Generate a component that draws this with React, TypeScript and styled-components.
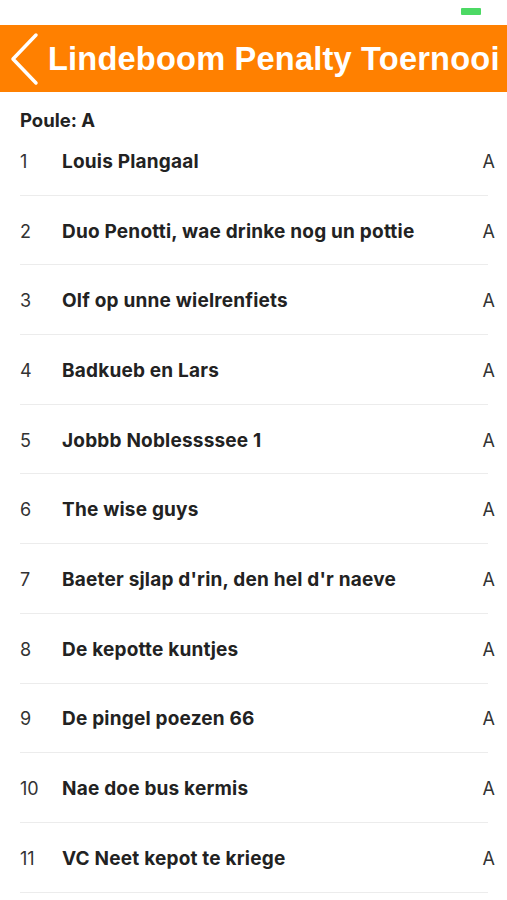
import styled, { createGlobalStyle } from "styled-components";

const teams = [
  "Louis Plangaal",
  "Duo Penotti, wae drinke nog un pottie",
  "Olf op unne wielrenfiets",
  "Badkueb en Lars",
  "Jobbb Noblessssee 1",
  "The wise guys",
  "Baeter sjlap d'rin, den hel d'r naeve",
  "De kepotte kuntjes",
  "De pingel poezen 66",
  "Nae doe bus kermis",
  "VC Neet kepot te kriege",
];

const GlobalStyle = createGlobalStyle`
  html, body {
    margin: 0;
    padding: 0;
    background: #fff;
    overflow: hidden;
  }
  body {
    font-family: Inter, "Liberation Sans", sans-serif;
    color: #222;
  }
`;

const App = () => {
  return (
    <Screen>
      <GlobalStyle />
      <StatusBar>
        <Battery />
      </StatusBar>
      <NavBar>
        <BackButton aria-label="back">
          <svg width="30" height="54" viewBox="0 0 30 54">
            <path
              d="M27 3 L4 27 L27 51"
              fill="none"
              stroke="#fff"
              strokeWidth="3.5"
              strokeLinecap="round"
              strokeLinejoin="round"
            />
          </svg>
        </BackButton>
        <Title>Lindeboom Penalty Toernooi</Title>
      </NavBar>
      <Section>
        <PouleLabel>Poule: A</PouleLabel>
        <List>
          {teams.map((name, i) => (
            <Row key={name}>
              <Num>{i + 1}</Num>
              <Name>{name}</Name>
              <Group>A</Group>
            </Row>
          ))}
        </List>
      </Section>
    </Screen>
  );
};

export default App;

const Screen = styled.div`
  width: 507px;
  height: 900px;
  overflow: hidden;
  background: #fff;
`;

const StatusBar = styled.div`
  height: 25px;
  display: flex;
  justify-content: flex-end;
  align-items: flex-start;
  padding-right: 26px;
`;

const Battery = styled.div`
  width: 20px;
  height: 7px;
  margin-top: 8px;
  border-radius: 1px;
  background: #4cd964;
`;

const NavBar = styled.div`
  height: 67px;
  background: #ff8000;
  display: flex;
  align-items: center;
  padding-left: 9px;
  gap: 9px;
`;

const BackButton = styled.div`
  display: flex;
  align-items: center;
  width: 30px;
  height: 54px;
`;

const Title = styled.h1`
  margin: 0;
  font-family: "Liberation Sans", Arial, sans-serif;
  font-weight: 700;
  font-size: 32.6px;
  color: #fff;
  white-space: nowrap;
  letter-spacing: 0.2px;
`;

const Section = styled.div`
  padding: 0 19px 0 20px;
`;

const PouleLabel = styled.div`
  font-weight: 700;
  font-size: 18.5px;
  color: #222;
  padding-top: 18px;
  height: 16px;
  line-height: 20px;
`;

const List = styled.div`
  display: flex;
  flex-direction: column;
`;

const Row = styled.div`
  height: 69.7px;
  box-sizing: border-box;
  display: flex;
  align-items: center;
  border-bottom: 1.5px solid #ececec;
  padding-top: 2px;
`;

const Num = styled.span`
  width: 42px;
  font-size: 18px;
  font-weight: 400;
  color: #333;
`;

const Name = styled.span`
  flex: 1;
  font-size: 19px;
  font-weight: 700;
  color: #222;
  letter-spacing: 0.2px;
  white-space: nowrap;
`;

const Group = styled.span`
  font-size: 18px;
  color: #333;
  margin-right: -7px;
`;
